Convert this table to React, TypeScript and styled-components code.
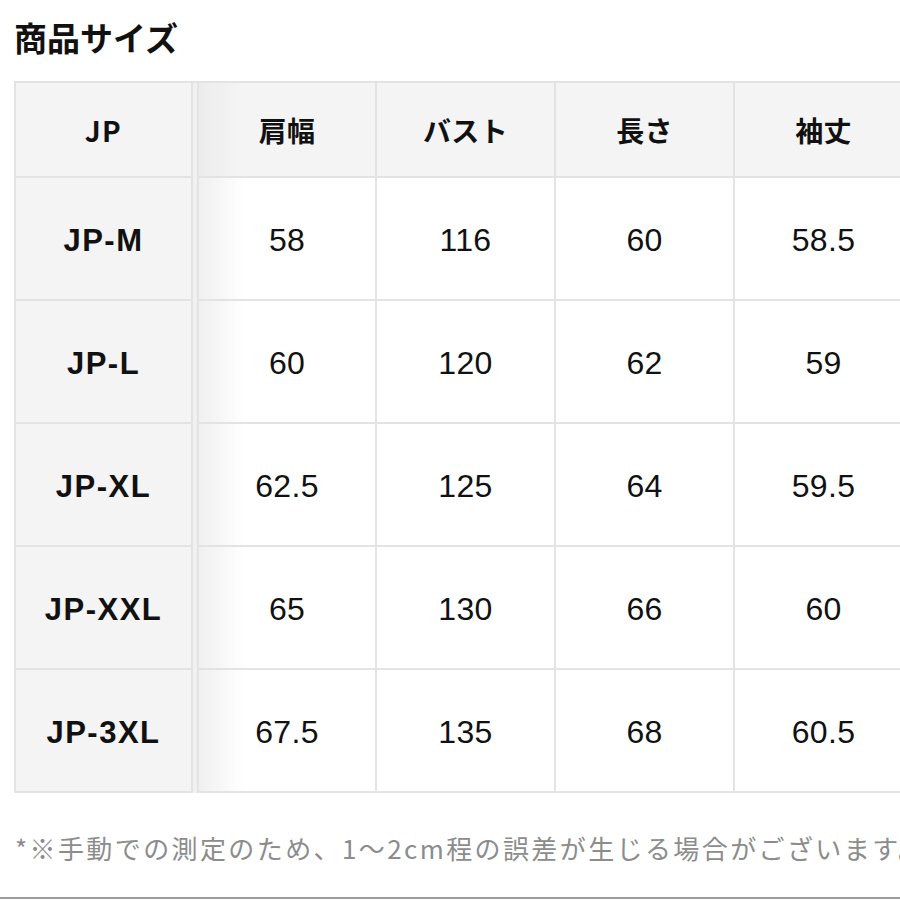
import * as React from 'react';
import styled, { createGlobalStyle } from 'styled-components';

const GlobalStyle = createGlobalStyle`
  html, body {
    margin: 0;
    padding: 0;
    background: #fff;
    overflow: hidden;
  }
  body {
    font-family: "Liberation Sans", "Noto Sans CJK JP", sans-serif;
    color: #111;
  }
`;

const headers = ['肩幅', 'バスト', '長さ', '袖丈'];

const rows = [
  { size: 'JP-M', values: ['58', '116', '60', '58.5'] },
  { size: 'JP-L', values: ['60', '120', '62', '59'] },
  { size: 'JP-XL', values: ['62.5', '125', '64', '59.5'] },
  { size: 'JP-XXL', values: ['65', '130', '66', '60'] },
  { size: 'JP-3XL', values: ['67.5', '135', '68', '60.5'] },
];

export default function App() {
  return (
    <Page>
      <GlobalStyle />
      <Title>商品サイズ</Title>
      <Frame>
        <Table>
          <Cell $head $sticky>JP</Cell>
          <Divider />
          {headers.map((h, i) => (
            <Cell key={h} $head $edge={i === 0}>
              {h}
            </Cell>
          ))}
          {rows.map((row) => (
            <React.Fragment key={row.size}>
              <Cell $sticky>{row.size}</Cell>
              {row.values.map((v, i) => (
                <Cell key={i} $edge={i === 0}>
                  {v}
                </Cell>
              ))}
            </React.Fragment>
          ))}
        </Table>
      </Frame>
      <Note>*※手動での測定のため、1〜2cm程の誤差が生じる場合がございます。</Note>
      <BottomRule />
    </Page>
  );
}

const Page = styled.div`
  width: 900px;
  height: 900px;
  display: flex;
  flex-direction: column;
  overflow: hidden;
`;

const Title = styled.h1`
  margin: 15px 0 0 14px;
  font-family: "Noto Sans CJK JP", sans-serif;
  font-size: 33px;
  font-weight: 700;
  line-height: 45px;
  color: #111;
`;

const Frame = styled.div`
  margin: 21px 0 0 14px;
  width: 886px;
  overflow: hidden;
`;

const Table = styled.div`
  display: grid;
  grid-template-columns: 177px 4px 180px 179px 179px 179px;
  grid-template-rows: 95px repeat(5, 123px);
  width: max-content;
  border-top: 2px solid #e3e3e3;
  border-left: 2px solid #e3e3e3;
`;

const Divider = styled.div`
  grid-column: 2;
  grid-row: 1 / -1;
  background: #f0f0f0;
`;

const Cell = styled.div<{ $head?: boolean; $sticky?: boolean; $edge?: boolean }>`
  display: flex;
  align-items: center;
  justify-content: center;
  box-sizing: border-box;
  border-right: 2px solid #e3e3e3;
  border-bottom: 2px solid #e3e3e3;
  border-left: ${(p) => (p.$edge ? '2px solid #e3e3e3' : 'none')};
  padding-top: ${(p) => (p.$head ? '0' : '4px')};
  background: ${(p) =>
    p.$head || p.$sticky
      ? p.$edge
        ? 'linear-gradient(to right, #ececec, #f4f4f4 40px)'
        : '#f4f4f4'
      : p.$edge
      ? 'linear-gradient(to right, #f0f0f0, #fff 45px)'
      : '#fff'};
  font-family: ${(p) =>
    p.$head ? '"Noto Sans CJK JP", sans-serif' : '"Liberation Sans", "Noto Sans CJK JP", sans-serif'};
  font-size: ${(p) => (p.$head ? '28px' : p.$sticky ? '31px' : '32px')};
  font-weight: ${(p) => (p.$head || p.$sticky ? 700 : 400)};
  letter-spacing: ${(p) => (p.$sticky ? '1.5px' : '0.3px')};
  color: #111;
`;

const Note = styled.p`
  margin: 38px 0 0 15px;
  font-family: "Noto Sans CJK JP", sans-serif;
  font-size: 26px;
  line-height: 34px;
  letter-spacing: 2.4px;
  color: #8c8c8c;
  white-space: nowrap;
`;

const BottomRule = styled.div`
  margin-top: auto;
  margin-bottom: 1px;
  height: 2px;
  background: #9c9c9c;
`;
